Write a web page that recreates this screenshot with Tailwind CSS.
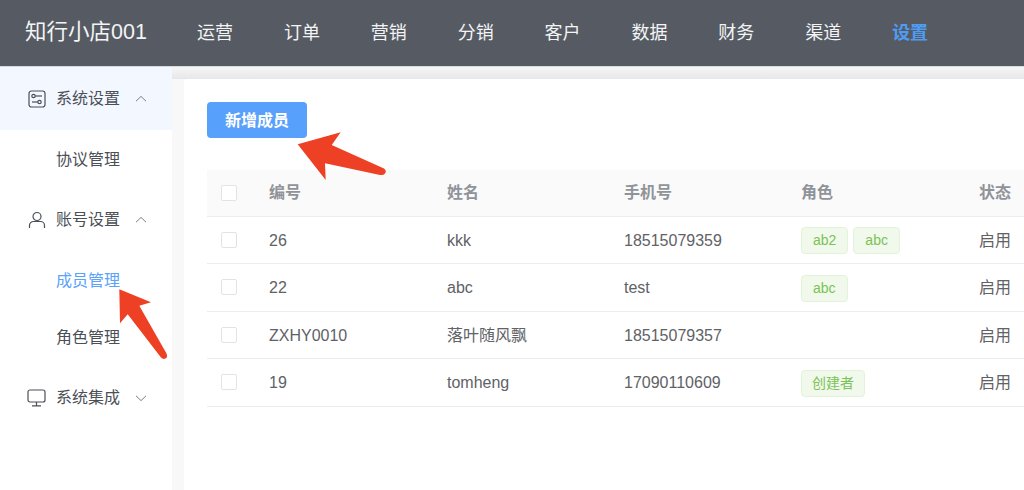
<!DOCTYPE html>
<html lang="zh">
<head>
<meta charset="utf-8">
<script src="https://cdn.jsdelivr.net/npm/@tailwindcss/browser@4"></script>
</head>
<body class="relative m-0 h-[490px] w-[1024px] overflow-hidden bg-white font-['Liberation_Sans','Noto_Sans_CJK_SC',sans-serif] text-[16px] text-[#606266]">
<header class="flex h-[67px] items-center border-b border-[#d8dade] bg-[#565b63] pb-[1px] pl-[25px] text-white">
  <div class="w-[172px] pt-[1px] text-[21.5px] leading-none text-[#f3f4f5]">知行小店001</div>
  <nav class="flex gap-[50.9px] text-[18px] leading-none text-[#f3f4f5]">
    <span>运营</span><span>订单</span><span>营销</span><span>分销</span><span>客户</span><span>数据</span><span>财务</span><span>渠道</span><span class="font-bold text-[#4f9cf5]">设置</span>
  </nav>
</header>
<div class="flex h-[423px]">
  <aside class="w-[172px] shrink-0 bg-white text-[#4b4f56]">
    <div class="flex h-[63px] items-center bg-[#f3f7ff] pl-[28px]">
      <svg class="mr-[10px] h-[18px] w-[18px]" viewBox="0 0 18 18" fill="none" stroke="#4b4f56" stroke-width="1.2"><rect x="1" y="1" width="16" height="16" rx="2.5"/><circle cx="5.5" cy="6" r="1.7"/><path d="M7.2 6H14"/><circle cx="11.5" cy="12" r="1.7"/><path d="M4 12h5.8"/></svg>
      <span class="leading-none">系统设置</span>
      <svg class="ml-[15px] h-[12px] w-[12px]" viewBox="0 0 12 12" fill="none" stroke="#7a7e85" stroke-width="1"><path d="M1 8.2 6 3.4l5 4.8"/></svg>
    </div>
    <div class="flex h-[60px] items-center pl-[56px] leading-none">协议管理</div>
    <div class="flex h-[60px] items-center pl-[28px]">
      <svg class="mr-[10px] h-[18px] w-[18px]" viewBox="0 0 18 18" fill="none" stroke="#4b4f56" stroke-width="1.2"><circle cx="9" cy="5.5" r="4"/><path d="M1.5 17v-2.5a4 4 0 0 1 4-4h7a4 4 0 0 1 4 4V17"/></svg>
      <span class="leading-none">账号设置</span>
      <svg class="ml-[15px] h-[12px] w-[12px]" viewBox="0 0 12 12" fill="none" stroke="#7a7e85" stroke-width="1"><path d="M1 8.2 6 3.4l5 4.8"/></svg>
    </div>
    <div class="flex h-[62px] items-center pl-[56px] leading-none text-[#5aa2fa]">成员管理</div>
    <div class="flex h-[52px] items-center pl-[56px] leading-none">角色管理</div>
    <div class="flex h-[68px] items-center pl-[27px]">
      <svg class="mr-[10px] h-[18px] w-[19px]" viewBox="0 0 19 18" fill="none" stroke="#4b4f56" stroke-width="1.2"><rect x="1" y="1" width="17" height="12" rx="2"/><path d="M9.5 13v3.5M5 16.800h9"/></svg>
      <span class="leading-none">系统集成</span>
      <svg class="ml-[15px] h-[12px] w-[12px]" viewBox="0 0 12 12" fill="none" stroke="#7a7e85" stroke-width="1"><path d="M1 3.800 6 8.600l5-4.800"/></svg>
    </div>
  </aside>
  <main class="flex flex-1 flex-col">
    <div class="h-[12px] shrink-0 bg-gradient-to-b from-[#f6f6f7] to-[#e7e7e9]"></div>
    <div class="flex flex-1 bg-gradient-to-r from-[#f8f8f9] to-[#e7e7e9]">
      <div class="ml-[12px] flex-1 rounded-tl-[4px] bg-white pl-[23px] pt-[23px]">
        <button class="flex h-[36px] w-[100px] items-center justify-center rounded-[4px] bg-[#57a0fb] pt-[1px] text-[16px] leading-none font-bold text-white">新增成员</button>
        <div class="mt-[32px] text-[16px]">
          <div class="grid h-[46.500px] grid-cols-[62px_178px_177px_177px_178px_1fr] items-center border-b border-[#ececf3] bg-[#fafafa] pl-[14px] font-bold text-[#909399]">
            <span class="h-[16px] w-[16px] rounded-[2px] border border-[#e2e3e8] bg-white"></span><span class="-ml-[14px]">编号</span><span class="-ml-[14px]">姓名</span><span class="-ml-[14px]">手机号</span><span class="-ml-[14px]">角色</span><span class="-ml-[14px]">状态</span>
          </div>
          <div class="grid h-[47.500px] grid-cols-[62px_178px_177px_177px_178px_1fr] items-center border-b border-[#ececf3] pl-[14px]">
            <span class="h-[16px] w-[16px] rounded-[2px] border border-[#e2e3e8] bg-white"></span><span class="-ml-[14px] pt-[2px]">26</span><span class="-ml-[14px] pt-[2px]">kkk</span><span class="-ml-[14px] pt-[2px]">18515079359</span>
            <span class="-ml-[14px] flex gap-[5px] pt-[2px]"><span class="flex h-[27px] items-center rounded-[4px] border border-[#e3f3d9] bg-[#f1f9ec] px-[11px] text-[14px] text-[#7ac356]">ab2</span><span class="flex h-[27px] items-center rounded-[4px] border border-[#e3f3d9] bg-[#f1f9ec] px-[11px] text-[14px] text-[#7ac356]">abc</span></span>
            <span class="-ml-[14px] pt-[2px]">启用</span>
          </div>
          <div class="grid h-[47.500px] grid-cols-[62px_178px_177px_177px_178px_1fr] items-center border-b border-[#ececf3] pl-[14px]">
            <span class="h-[16px] w-[16px] rounded-[2px] border border-[#e2e3e8] bg-white"></span><span class="-ml-[14px] pt-[2px]">22</span><span class="-ml-[14px] pt-[2px]">abc</span><span class="-ml-[14px] pt-[2px]">test</span>
            <span class="-ml-[14px] flex pt-[2px]"><span class="flex h-[27px] items-center rounded-[4px] border border-[#e3f3d9] bg-[#f1f9ec] px-[11px] text-[14px] text-[#7ac356]">abc</span></span>
            <span class="-ml-[14px] pt-[2px]">启用</span>
          </div>
          <div class="grid h-[47.500px] grid-cols-[62px_178px_177px_177px_178px_1fr] items-center border-b border-[#ececf3] pl-[14px]">
            <span class="h-[16px] w-[16px] rounded-[2px] border border-[#e2e3e8] bg-white"></span><span class="-ml-[14px] pt-[2px]">ZXHY0010</span><span class="-ml-[14px] pt-[2px]">落叶随风飘</span><span class="-ml-[14px] pt-[2px]">18515079357</span><span></span>
            <span class="-ml-[14px] pt-[2px]">启用</span>
          </div>
          <div class="grid h-[47.500px] grid-cols-[62px_178px_177px_177px_178px_1fr] items-center border-b border-[#ececf3] pl-[14px]">
            <span class="h-[16px] w-[16px] rounded-[2px] border border-[#e2e3e8] bg-white"></span><span class="-ml-[14px] pt-[2px]">19</span><span class="-ml-[14px] pt-[2px]">tomheng</span><span class="-ml-[14px] pt-[2px]">17090110609</span>
            <span class="-ml-[14px] flex pt-[2px]"><span class="flex h-[27px] items-center rounded-[4px] border border-[#e3f3d9] bg-[#f1f9ec] px-[10px] text-[14px] text-[#7ac356]">创建者</span></span>
            <span class="-ml-[14px] pt-[2px]">启用</span>
          </div>
        </div>
      </div>
    </div>
  </main>
</div>
<svg class="pointer-events-none absolute left-0 top-0 h-[490px] w-[1024px]" viewBox="0 0 1024 490">
  <path d="M297.700 144.300 340.700 132.300 331.700 145 384 168.500Q387 171 385 173.500 383.500 175.500 380 175L325 163.300 325.700 180Z" fill="#ed4024"/>
  <path d="M119.300 289.300 151 302.300 139.300 305.700 166.500 353.500Q168 357 165.500 358.500 163 359.800 161 357.500L127.700 314.300 120 323.300Z" fill="#ed4024"/>
</svg>
</body>
</html>
